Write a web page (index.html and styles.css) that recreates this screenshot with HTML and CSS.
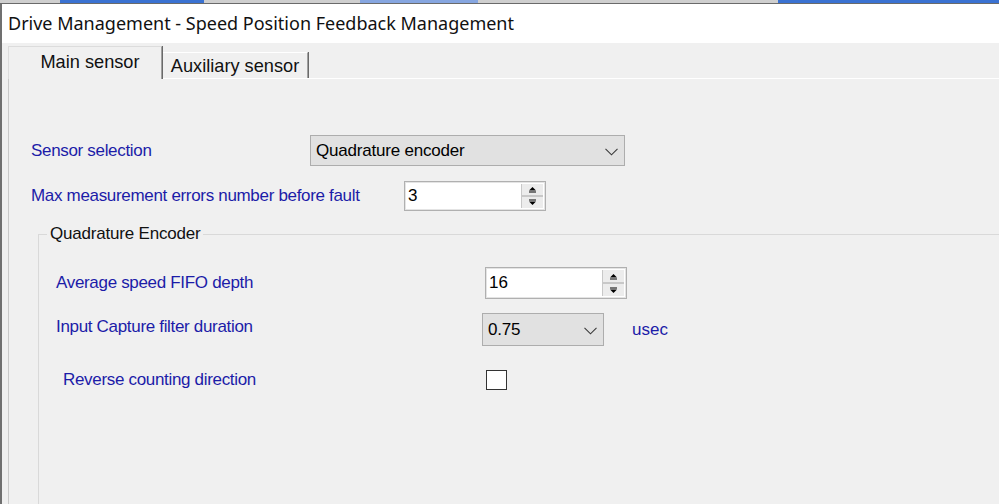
FILE: index.html
```html
<!DOCTYPE html>
<html lang="en">
<head>
  <meta charset="UTF-8">
  <title>Drive Management - Speed Position Feedback Management</title>
  <link rel="stylesheet" href="styles.css">
</head>
<body>
  <!-- strip of the window behind -->
  <div class="desk">
    <span class="seg seg-gray" style="width:60px"></span>
    <span class="seg seg-blue" style="width:144px"></span>
    <span class="seg seg-gray" style="width:156px"></span>
    <span class="seg seg-pale" style="width:118px"></span>
    <span class="seg seg-gray" style="width:300px"></span>
    <span class="seg seg-blue" style="flex:1"></span>
  </div>

  <div class="window">
    <div class="titlebar">Drive Management - Speed Position Feedback Management</div>

    <div class="client">
      <div class="tabs">
        <div class="tab tab-active">Main sensor</div>
        <div class="tab">Auxiliary sensor</div>
      </div>

      <div class="page">
        <div class="row row-first">
          <label class="lbl lbl-sensor">Sensor selection</label>
          <div class="combo combo-sensor">
            <span>Quadrature encoder</span>
            <svg class="chevron" width="13" height="8" viewBox="0 0 13 8"><path d="M0.5 0.8 L6.5 6.8 L12.5 0.8" fill="none" stroke="#3a3a3a" stroke-width="1.1"/></svg>
          </div>
        </div>

        <div class="row row-second">
          <label class="lbl lbl-errors">Max measurement errors number before fault</label>
          <div class="spin spin-errors">
            <span class="spin-value">3</span>
            <div class="spin-buttons">
              <span class="spin-btn"><svg width="9" height="7" viewBox="0 0 9 7"><path d="M4.5 1 L8 4.5 L1 4.5 Z" fill="#000"/><rect x="1" y="5.5" width="7" height="1" fill="#000"/></svg></span>
              <span class="spin-btn"><svg width="9" height="7" viewBox="0 0 9 7"><rect x="1" y="0.5" width="7" height="1" fill="#000"/><path d="M1 2.5 L8 2.5 L4.5 6 Z" fill="#000"/></svg></span>
            </div>
          </div>
        </div>

        <fieldset class="group">
          <legend>Quadrature Encoder</legend>

          <div class="row grow-fifo">
            <label class="lbl lbl-fifo">Average speed FIFO depth</label>
            <div class="spin spin-fifo">
              <span class="spin-value">16</span>
              <div class="spin-buttons">
                <span class="spin-btn"><svg width="9" height="7" viewBox="0 0 9 7"><path d="M4.5 1 L8 4.5 L1 4.5 Z" fill="#000"/><rect x="1" y="5.5" width="7" height="1" fill="#000"/></svg></span>
                <span class="spin-btn"><svg width="9" height="7" viewBox="0 0 9 7"><rect x="1" y="0.5" width="7" height="1" fill="#000"/><path d="M1 2.5 L8 2.5 L4.5 6 Z" fill="#000"/></svg></span>
              </div>
            </div>
          </div>

          <div class="row grow-filter">
            <label class="lbl lbl-filter">Input Capture filter duration</label>
            <div class="combo combo-filter">
              <span>0.75</span>
              <svg class="chevron" width="13" height="8" viewBox="0 0 13 8"><path d="M0.5 0.8 L6.5 6.8 L12.5 0.8" fill="none" stroke="#3a3a3a" stroke-width="1.1"/></svg>
            </div>
            <span class="unit">usec</span>
          </div>

          <div class="row grow-reverse">
            <label class="lbl lbl-reverse">Reverse counting direction</label>
            <span class="checkbox"></span>
          </div>
        </fieldset>
      </div>
    </div>
  </div>
</body>
</html>
```

FILE: styles.css
```css
html, body {
  margin: 0;
  height: 504px;
  overflow: hidden;
}
body {
  font-family: "Liberation Sans", Arial, sans-serif;
  background-color: #f0f0f0;
  display: flex;
  flex-direction: column;
}
.desk {
  display: flex;
  height: 3px;
  border-bottom: 1px solid #6a6a6a;
}
.seg-gray {
  background-color: #cfcfcf;
}
.seg-blue {
  background-color: #3a72d2;
}
.seg-pale {
  background-color: #86a6e0;
}
.window {
  flex: 1;
  display: flex;
  flex-direction: column;
  border-left: 2px solid #707070;
  min-height: 0;
}
.titlebar {
  height: 39px;
  background-color: #fff;
  font-family: "Noto Sans", "Open Sans", sans-serif;
  font-size: 18px;
  color: #111;
  padding-left: 6px;
  line-height: 39px;
  white-space: nowrap;
}
.client {
  flex: 1;
  display: flex;
  flex-direction: column;
  padding-top: 4px;
  min-height: 0;
}
.tabs {
  display: flex;
  align-items: flex-end;
  padding-left: 6px;
  height: 31px;
}
.tab {
  font-size: 18.2px;
  color: #111;
  height: 25px;
  line-height: 27px;
  padding: 0 2px;
  width: 140px;
  text-align: center;
  white-space: nowrap;
  border-top: 1px solid #fff;
  border-left: 1px solid #fff;
  border-right: 1px solid #a0a0a0;
  box-shadow: 1px 0 0 #6a6a6a;
}
.tab-active {
  position: relative;
  z-index: 1;
  height: 32px;
  line-height: 30px;
  width: 142px;
  padding: 0 0 0 10px;
  margin-bottom: -1px;
  background-color: #f0f0f0;
  border-left-color: #dcdcdc;
  border-top-color: #dcdcdc;
}
.page {
  flex: 1;
  margin-left: 6px;
  border-top: 1px solid #fff;
  border-left: 1px solid #c9c9c9;
  padding-left: 22px;
  overflow: hidden;
}
.row {
  display: flex;
  align-items: center;
}
.row-first {
  margin-top: 56px;
}
.row-second {
  margin-top: 15px;
}
.lbl {
  font-size: 17px;
  letter-spacing: -0.32px;
  color: #1c1ca8;
  flex: none;
}
.lbl-sensor {
  width: 279px;
}
.lbl-errors {
  width: 373px;
}
.combo {
  display: flex;
  align-items: center;
  justify-content: space-between;
  box-sizing: border-box;
  background-color: #e1e1e1;
  border: 1px solid #adadad;
  padding: 0 6px 0 5px;
  font-size: 17px;
  letter-spacing: -0.2px;
  color: #000;
}
.chevron {
  margin-top: 2px;
}
.combo-sensor {
  width: 315px;
  height: 31px;
}
.combo-filter {
  width: 122px;
  height: 33px;
}
.spin {
  display: flex;
  box-sizing: border-box;
  background-color: #fff;
  border: 1px solid #b0b0b0;
  box-shadow: inset 0 0 0 1px #e4e4e4;
  padding: 2px;
}
.spin-errors {
  width: 142px;
  height: 30px;
}
.spin-fifo {
  width: 142px;
  height: 32px;
}
.spin-value {
  flex: 1;
  font-size: 17px;
  color: #000;
  display: flex;
  align-items: center;
  padding-left: 1px;
}
.spin-buttons {
  width: 22px;
  display: flex;
  flex-direction: column;
  gap: 2px;
  background-color: #c8c8c8;
}
.spin-btn {
  flex: 1;
  display: flex;
  align-items: center;
  justify-content: center;
  background-color: #ececec;
  border-left: 1px solid #c8c8c8;
}
.group {
  margin: 13px -60px 0 7px;
  padding: 0 0 0 8px;
  border: 1px solid #d9d9d9;
  min-height: 400px;
}
.group legend {
  font-size: 17px;
  letter-spacing: -0.2px;
  color: #111;
  padding: 0 3px;
  line-height: 20px;
}
.grow-fifo {
  margin-top: 23px;
  padding-left: 9px;
}
.grow-filter {
  margin-top: 14px;
  padding-left: 9px;
}
.grow-reverse {
  margin-top: 24px;
  padding-left: 16px;
}
.lbl-fifo {
  width: 429px;
}
.lbl-filter {
  width: 426px;
  margin-bottom: 5px;
}
.lbl-reverse {
  width: 423px;
}
.unit {
  font-size: 17px;
  color: #1c1ca8;
  margin-left: 28px;
}
.checkbox {
  width: 21px;
  height: 20px;
  box-sizing: border-box;
  background-color: #fff;
  border: 1px solid #333;
}
```
